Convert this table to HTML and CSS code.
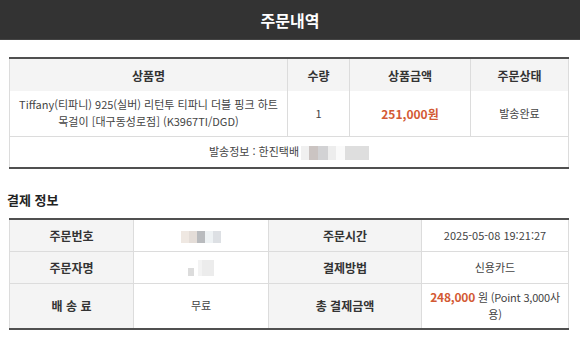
FILE: index.html
```html
<!DOCTYPE html>
<html lang="ko">
<head>
<meta charset="utf-8">
<link rel="stylesheet" href="styles.css">
</head>
<body>
<header class="topbar"><h1 class="title">주문내역</h1></header>
<main class="content">
  <table class="tbl order">
    <colgroup><col class="c1"><col class="c2"><col class="c3"><col class="c4"></colgroup>
    <thead>
      <tr class="head-row"><th>상품명</th><th>수량</th><th>상품금액</th><th>주문상태</th></tr>
    </thead>
    <tbody>
      <tr class="prod-row">
        <td class="prod">Tiffany(티파니) 925(실버) 리턴투 티파니 더블 핑크 하트<br>목걸이 [대구동성로점] (K3967TI/DGD)</td>
        <td>1</td>
        <td class="price">251,000원</td>
        <td>발송완료</td>
      </tr>
      <tr class="ship-row">
        <td colspan="4"><span class="ship">발송정보 : 한진택배</span><span class="blur b-ship"><i class="s1"></i><i class="s2"></i><i class="s3"></i><i class="s4"></i><i class="s5"></i><i class="s6"></i></span></td>
      </tr>
    </tbody>
  </table>

  <h2 class="section">결제 정보</h2>
  <table class="tbl pay">
    <colgroup><col class="p1"><col class="p2"><col class="p3"><col class="p4"></colgroup>
    <tbody>
      <tr class="r32"><th>주문번호</th><td><span class="blur b-num"><i class="n1"></i><i class="n2"></i><i class="n3"></i><i class="n4"></i><i class="n5"></i></span></td><th>주문시간</th><td>2025-05-08 19:21:27</td></tr>
      <tr class="r32"><th>주문자명</th><td><span class="blur b-name"><i class="m1"></i><i class="m2"></i><i class="m3"></i></span></td><th>결제방법</th><td>신용카드</td></tr>
      <tr class="r46"><th>배 송 료</th><td>무료</td><th>총 결제금액</th><td class="total"><b class="price">248,000</b> 원 (Point 3,000사<br>용)</td></tr>
    </tbody>
  </table>
</main>
</body>
</html>
```

FILE: styles.css
```css
* { box-sizing: border-box; }
html, body { margin: 0; padding: 0; background: #fff; }
body {
  font-family: "Noto Sans CJK KR", "Noto Sans", sans-serif;
  font-size: 11px;
  color: #444;
  width: 580px;
}
.topbar {
  height: 40px;
  background: #333333;
  border-bottom: 1px solid #444;
  display: flex;
  align-items: center;
  justify-content: center;
}
.title {
  margin: 0;
  color: #fff;
  font-size: 16px;
  font-weight: 700;
  line-height: 1;
}
.content { padding: 17px 12px 0 9px; }
.tbl {
  width: 559px;
  border-collapse: collapse;
  table-layout: fixed;
  border-top: 2px solid #505050;
  border-bottom: 2px solid #505050;
}
.tbl th, .tbl td {
  border: 1px solid #dcdcdc;
  text-align: center;
  vertical-align: middle;
  padding: 0 6px;
  line-height: 17px;
}
.tbl tr:first-child th, .tbl tr:first-child td { border-top: 0; }
.tbl tr:last-child th, .tbl tr:last-child td { border-bottom: 0; }
.tbl th { font-size: 12px; font-weight: 700; color: #333; background: #f4f4f4; }
.order .c1 { width: 278px; }
.order .c2 { width: 62px; }
.order .c3 { width: 121px; }
.order .c4 { width: 98px; }
.head-row { height: 33px; }
.prod-row { height: 45px; }
.ship-row { height: 32px; }
.prod { padding: 0 2px; }
.price { color: #d35a34; font-weight: 700; font-size: 12px; }
.section {
  margin: 21px 0 8px -2px;
  font-size: 13px;
  font-weight: 700;
  color: #222;
  line-height: 20px;
}
.pay .p1 { width: 124px; }
.pay .p2 { width: 135px; }
.pay .p3 { width: 153px; }
.pay .p4 { width: 147px; }
.r32 { height: 32px; }
.r46 { height: 46px; }
.tbl .total { padding: 0 2px; white-space: nowrap; letter-spacing: -0.2px; }
.blur { display: inline-flex; vertical-align: middle; filter: blur(0.6px); }
.blur i { display: block; }
.b-ship { margin-left: 2px; height: 14px; }
.b-ship .s1 { width: 8px; background: #f0f0f0; }
.b-ship .s2 { width: 9px; background: #cbc4c2; }
.b-ship .s3 { width: 10px; background: #d2d2d4; }
.b-ship .s4 { width: 8px; background: #ededed; }
.b-ship .s5 { width: 9px; background: #fafafa; }
.b-ship .s6 { width: 24px; background: #dedede; }
.b-num { height: 12px; }
.b-num .n1 { width: 8px; background: #efe8e2; }
.b-num .n2 { width: 8px; background: #e4ddd8; }
.b-num .n3 { width: 8px; background: #b9bbbe; }
.b-num .n4 { width: 8px; background: #eef2f4; }
.b-num .n5 { width: 8px; background: #dde0e4; }
.b-name { height: 16px; align-items: flex-end; }
.b-name .m1 { width: 6px; height: 8px; background: #dcdcdc; margin-right: 4px; }
.b-name .m2 { width: 4px; height: 16px; background: #f3f3f3; }
.b-name .m3 { width: 12px; height: 16px; background: #ececec; }
```
